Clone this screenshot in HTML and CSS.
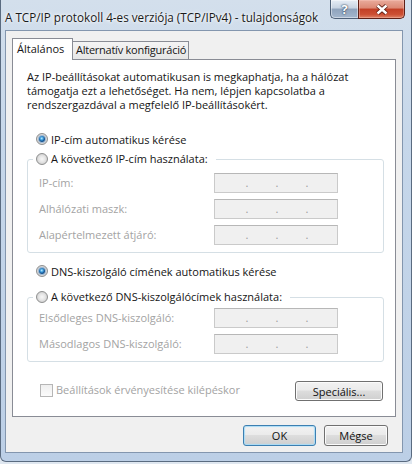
FILE: index.html
```html
<!DOCTYPE html>
<html lang="hu">
<head>
<meta charset="utf-8">
<title>TCP/IPv4 tulajdonságok</title>
<link rel="stylesheet" href="styles.css">
</head>
<body>
<div class="window">
  <div class="titlebar">
    <div class="title">A TCP/IP protokoll 4-es verziója (TCP/IPv4) - tulajdonságok</div>
    <div class="cbtn help">?</div>
    <div class="cbtn close">
      <svg width="14" height="11" viewBox="0 0 14 11">
        <path d="M2.5 1.5 L11.5 9.5 M11.5 1.5 L2.5 9.5" stroke="#5b1c12" stroke-width="4.2" fill="none"/>
        <path d="M2.5 1.5 L11.5 9.5 M11.5 1.5 L2.5 9.5" stroke="#ffffff" stroke-width="2.4" fill="none"/>
      </svg>
    </div>
  </div>
  <div class="client">
    <div class="tabs">
      <div class="tab active">Általános</div>
      <div class="tab">Alternatív konfiguráció</div>
    </div>
    <div class="panel">
      <p class="intro">Az IP-beállításokat automatikusan is megkaphatja, ha a hálózat<br>támogatja ezt a lehetőséget. Ha nem, lépjen kapcsolatba a<br>rendszergazdával a megfelelő IP-beállításokért.</p>

      <div class="radio-row first"><span class="radio on"></span>IP-cím automatikus kérése</div>
      <fieldset class="group ip-group">
        <legend><span class="radio-row in-legend"><span class="radio"></span>A következő IP-cím használata:</span></legend>
        <div class="fields">
          <span class="flabel">IP-cím:</span>
          <span class="ipbox"><i>.</i><i>.</i><i>.</i></span>
          <span class="flabel">Alhálózati maszk:</span>
          <span class="ipbox"><i>.</i><i>.</i><i>.</i></span>
          <span class="flabel">Alapértelmezett átjáró:</span>
          <span class="ipbox"><i>.</i><i>.</i><i>.</i></span>
        </div>
      </fieldset>

      <div class="radio-row dns-first"><span class="radio on"></span>DNS-kiszolgáló címének automatikus kérése</div>
      <fieldset class="group dns-group">
        <legend><span class="radio-row in-legend"><span class="radio"></span>A következő DNS-kiszolgálócímek használata:</span></legend>
        <div class="fields">
          <span class="flabel">Elsődleges DNS-kiszolgáló:</span>
          <span class="ipbox"><i>.</i><i>.</i><i>.</i></span>
          <span class="flabel">Másodlagos DNS-kiszolgáló:</span>
          <span class="ipbox"><i>.</i><i>.</i><i>.</i></span>
        </div>
      </fieldset>

      <div class="bottom-row">
        <span class="check-wrap"><span class="chk"></span><span class="disabled">Beállítások érvényesítése kilépéskor</span></span>
        <button class="btn special">Speciális...</button>
      </div>
    </div>
    <div class="footer">
      <button class="btn default ok">OK</button>
      <button class="btn cancel">Mégse</button>
    </div>
  </div>
</div>
</body>
</html>
```

FILE: styles.css
```css
* { box-sizing: border-box; }
html, body { margin: 0; padding: 0; }
body {
  width: 412px;
  height: 464px;
  overflow: hidden;
  background: #dfe7f0;
  font-family: "Open Sans", "Noto Sans", sans-serif;
  font-size: 11px;
  color: #151515;
}
.window {
  width: 412px;
  height: 462px;
  display: flex;
  flex-direction: column;
  background: linear-gradient(180deg, #d3dfec 0%, #c6d7ea 30%, #bccfe6 100%);
  border: 1px solid #5a6b80;
  border-top: none;
  border-radius: 0 0 6px 6px;
}
.titlebar {
  height: 30px;
  flex: none;
  display: grid;
  grid-template-columns: minmax(0, 1fr) 28px 47px;
  align-items: start;
  padding-right: 6px;
}
.title {
  min-width: 0;
  overflow: hidden;
  font-size: 11.7px;
  line-height: 16px;
  padding: 9px 0 0 4px;
  color: #1a1a1a;
  white-space: nowrap;
  text-shadow: 0 0 5px #fff, 0 0 3px #fff;
}
.cbtn {
  height: 19px;
  display: flex;
  align-items: center;
  justify-content: center;
}
.help {
  border: 1px solid #4f6178;
  border-top: none;
  border-right: none;
  border-radius: 0 0 0 5px;
  background: linear-gradient(180deg, #e6edf5 0%, #c7d3e2 45%, #8fa3bc 50%, #a3b6cd 100%);
  box-shadow: inset 0 0 0 1px rgba(255, 255, 255, 0.45);
  color: #fff;
  font-weight: bold;
  font-size: 13px;
  text-shadow: 0 0 2px #2a3d55, 0 0 1px #2a3d55;
}
.close {
  border: 1px solid #5e2017;
  border-top: none;
  border-radius: 0 0 5px 0;
  background: linear-gradient(180deg, #e9ab9c 0%, #dc8874 45%, #c23f26 50%, #cc4f33 80%, #de8266 100%);
  box-shadow: inset 0 0 0 1px rgba(255, 210, 200, 0.35);
}
.client {
  flex: 1;
  margin: 0 8px 8px 4px;
  background: #f0f0f0;
  border: 1px solid #8396ae;
  display: flex;
  flex-direction: column;
  padding: 7px 6px 0 6px;
}
.tabs {
  display: flex;
  align-items: flex-end;
  height: 21px;
  position: relative;
  z-index: 1;
}
.tab {
  height: 18px;
  width: 117px;
  margin-left: -1px;
  border: 1px solid #898c95;
  border-bottom: none;
  background: linear-gradient(180deg, #f4f4f4 0%, #e6e6e6 100%);
  padding-left: 3px;
  line-height: 16px;
  white-space: nowrap;
  letter-spacing: -0.25px;
}
.tab.active {
  width: 61px;
  margin-left: 0;
  height: 22px;
  margin-bottom: -1px;
  background: #fff;
  position: relative;
  z-index: 2;
  padding-left: 4px;
  line-height: 19px;
  letter-spacing: 0;
}
.panel {
  height: 358px;
  background: #fff;
  border: 1px solid #898c95;
  padding: 10px 11px 0 14px;
  display: flex;
  flex-direction: column;
}
.intro {
  margin: 0;
  line-height: 14px;
  white-space: nowrap;
}
.radio-row {
  display: flex;
  align-items: center;
  height: 16px;
  padding-left: 9px;
  white-space: nowrap;
}
.radio-row.first { margin-top: 19px; }
.radio-row.dns-first { margin-top: 10px; }
.radio-row.in-legend { padding-left: 0; }
.radio {
  flex: none;
  position: relative;
  width: 12px;
  height: 12px;
  margin-right: 3px;
  border-radius: 50%;
  border: 1px solid #8e8f8f;
  background: radial-gradient(circle at 50% 50%, #f7f7f7 0, #e6e6e6 3px, #cfcfcf 5.5px);
}
.radio.on::after {
  content: "";
  position: absolute;
  left: 2px;
  top: 2px;
  width: 6px;
  height: 6px;
  border-radius: 50%;
  background: radial-gradient(circle at 45% 40%, #bdefff 0, #3d9bdc 1.6px, #114f8c 3px);
  box-shadow: 0 0 0 1px rgba(70, 130, 190, 0.45);
}
.group {
  margin: 4px 0 0 0;
  min-width: 0;
  border: 1px solid #d5dfe5;
  border-radius: 3px;
  padding: 6px 5px 7px 5px;
}
.dns-group { margin-top: 10px; padding-top: 3px; }
.group legend {
  padding: 0 8px 0 3px;
  line-height: 16px;
}
.fields {
  margin-left: 6px;
  display: grid;
  grid-template-columns: 175px 124px;
  grid-auto-rows: 20px;
  row-gap: 6px;
}
.flabel, .disabled {
  color: #a3a3a3;
  line-height: 20px;
  white-space: nowrap;
}
.ipbox {
  display: grid;
  grid-template-columns: repeat(3, 30px);
  justify-items: center;
  padding-left: 17px;
  border: 1px solid #cacaca;
  border-top-color: #b7b7b7;
  background: #f0f0f0;
}
.ipbox i {
  font-style: normal;
  color: #9a9a9a;
  line-height: 17px;
}
.bottom-row {
  margin-top: 19px;
  height: 20px;
  display: flex;
  justify-content: space-between;
  align-items: center;
  padding-left: 13px;
}
.check-wrap { display: flex; align-items: center; margin-top: -2px; }
.chk {
  width: 13px;
  height: 13px;
  margin-right: 3px;
  border: 1px solid #b6b6b6;
  background: linear-gradient(180deg, #efefef, #fbfbfb);
}
.btn {
  height: 21px;
  padding: 0;
  border: 1px solid #707070;
  border-radius: 3px;
  background: linear-gradient(180deg, #f2f2f2 0%, #ebebeb 45%, #dddddd 50%, #cfcfcf 100%);
  box-shadow: inset 0 0 0 1px #fbfbfb;
  font: inherit;
  color: #111;
  display: flex;
  align-items: center;
  justify-content: center;
}
.special { width: 88px; height: 20px; margin-right: 1px; }
.footer {
  display: flex;
  justify-content: flex-end;
  gap: 8px;
  padding: 8px 8px 0 0;
}
.ok { width: 73px; }
.cancel { width: 64px; }
.btn.default {
  border-color: #3c7fb1;
  box-shadow: inset 0 0 1px 1px #a9dcf7;
}
```
